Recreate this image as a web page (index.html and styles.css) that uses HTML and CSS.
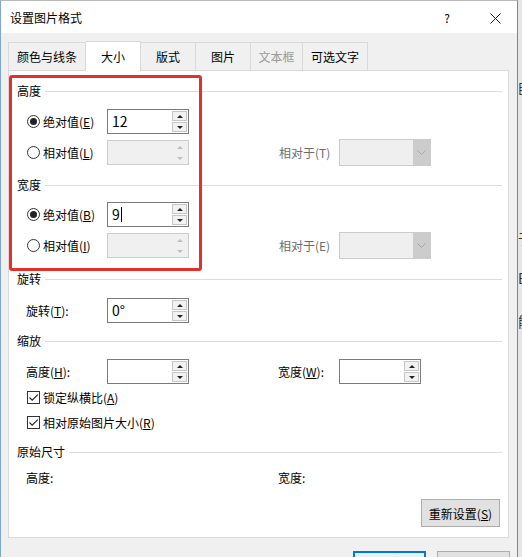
FILE: index.html
```html
<html lang="zh-CN">
<head>
  <meta charset="UTF-8">
  <title>设置图片格式</title>
  <link rel="stylesheet" href="styles.css">
</head>
<body>
  <div class="screen">
    <div class="window">
      <div class="titlebar">
        <span class="title">设置图片格式</span>
        <span class="help">?</span>
        <span class="close">
          <svg width="11" height="11" viewBox="0 0 11 11"><path d="M0.5 0.5L10.5 10.5M10.5 0.5L0.5 10.5" stroke="#1a1a1a" stroke-width="1" fill="none"/></svg>
        </span>
      </div>

      <div class="client">
        <div class="tabs">
          <div class="tab t-color">颜色与线条</div>
          <div class="tab t-size active">大小</div>
          <div class="tab t-55">版式</div>
          <div class="tab t-55">图片</div>
          <div class="tab t-text disabled">文本框</div>
          <div class="tab t-alt">可选文字</div>
        </div>

        <div class="panel">
          <div class="annot"></div>

          <div class="heading"><span>高度</span></div>
          <div class="rows gap5">
            <div class="row">
              <label class="radio"><i class="dot on"></i>绝对值(<u>E</u>)</label>
              <div class="spin"><span class="val">12</span><span class="btns"><b class="up"></b><b class="down"></b></span></div>
            </div>
            <div class="row">
              <label class="radio"><i class="dot"></i>相对值(<u>L</u>)</label>
              <div class="spin off"><span class="val"></span><span class="btns"><b class="up"></b><b class="down"></b></span></div>
              <span></span>
              <span class="dim">相对于(T)</span>
              <div class="combo"><span class="field"></span><span class="arrow"><svg width="9" height="6" viewBox="0 0 9 6"><path d="M0.5 0.5L4.5 4.5L8.5 0.5" stroke="#a8a8a8" fill="none"/></svg></span></div>
            </div>
          </div>

          <div class="heading gap7"><span>宽度</span></div>
          <div class="rows gap4">
            <div class="row">
              <label class="radio"><i class="dot on"></i>绝对值(<u>B</u>)</label>
              <div class="spin"><span class="val">9<em class="caret"></em></span><span class="btns"><b class="up"></b><b class="down"></b></span></div>
            </div>
            <div class="row">
              <label class="radio"><i class="dot"></i>相对值(<u>I</u>)</label>
              <div class="spin off"><span class="val"></span><span class="btns"><b class="up"></b><b class="down"></b></span></div>
              <span></span>
              <span class="dim">相对于(E)</span>
              <div class="combo"><span class="field"></span><span class="arrow"><svg width="9" height="6" viewBox="0 0 9 6"><path d="M0.5 0.5L4.5 4.5L8.5 0.5" stroke="#a8a8a8" fill="none"/></svg></span></div>
            </div>
          </div>

          <div class="heading gap8"><span>旋转</span></div>
          <div class="rows gap6">
            <div class="row">
              <span class="lbl">旋转(<u>T</u>):</span>
              <div class="spin"><span class="val">0°</span><span class="btns"><b class="up"></b><b class="down"></b></span></div>
            </div>
          </div>

          <div class="heading gap5"><span>缩放</span></div>
          <div class="rows gap5">
            <div class="row">
              <span class="lbl">高度(<u>H</u>):</span>
              <div class="spin"><span class="val"></span><span class="btns"><b class="up"></b><b class="down"></b></span></div>
              <span></span>
              <span class="lbl">宽度(<u>W</u>):</span>
              <div class="spin"><span class="val"></span><span class="btns"><b class="up"></b><b class="down"></b></span></div>
            </div>
            <div class="check-row first">
              <label class="check"><i class="box"><svg width="11" height="11" viewBox="0 0 11 11"><path d="M1.5 5.5L4.2 8.2L9.8 2.6" stroke="#222" stroke-width="1.1" fill="none"/></svg></i>锁定纵横比(<u>A</u>)</label>
            </div>
            <div class="check-row">
              <label class="check"><i class="box"><svg width="11" height="11" viewBox="0 0 11 11"><path d="M1.5 5.5L4.2 8.2L9.8 2.6" stroke="#222" stroke-width="1.1" fill="none"/></svg></i>相对原始图片大小(<u>R</u>)</label>
            </div>
          </div>

          <div class="heading gap7"><span>原始尺寸</span></div>
          <div class="rows gap3">
            <div class="row short">
              <span class="lbl">高度:</span>
              <span></span>
              <span></span>
              <span class="lbl">宽度:</span>
            </div>
          </div>

          <div class="actions">
            <button class="btn reset">重新设置(<u>S</u>)</button>
          </div>
        </div>

        <div class="footer">
          <button class="btn ok">确定</button>
          <button class="btn">取消</button>
        </div>
      </div>
    </div>

    <div class="backdrop">
      <span class="frag f1">卧</span>
      <span class="frag f2">于</span>
      <span class="frag f3">E</span>
      <span class="frag f4">能</span>
    </div>
  </div>
</body>
</html>
```

FILE: styles.css
```css
* { box-sizing: border-box; }
html, body {
  margin: 0;
  background: #e6e6e6;
}

body {
  font-family: "Noto Sans CJK SC", "Microsoft YaHei", sans-serif;
  font-size: 12px;
  line-height: 16px;
  color: #000;
}

.screen {
  display: flex;
  width: 522px;
  height: 557px;
  overflow: hidden;
}

.window {
  width: 518px;
  height: 557px;
  border-left: 1px solid #7ea6d6;
  border-right: 1px solid #4f9b98;
  border-top: 1px solid #b9b9b9;
  background: #f0f0f0;
  flex: none;
}

/* title bar */
.titlebar {
  height: 32px;
  background: #fff;
  display: flex;
  align-items: center;
  padding: 2px 0 0 9px;
}
.title { flex: 1; }
.help {
  width: 12px;
  margin-right: 37px;
  text-align: center;
}
.close {
  display: flex;
  margin-right: 16px;
}

/* tabs */
.client {
  height: 524px;
  padding-top: 8px;
}
.tabs {
  display: flex;
  height: 29px;
  margin-left: 7px;
  position: relative;
  z-index: 1;
}
.tab {
  height: 28px;
  margin-top: 1px;
  border: 1px solid #d9d9d9;
  border-left: none;
  border-bottom: none;
  background: #f0f0f0;
  text-align: center;
  line-height: 28px;
}
.tab:first-child { border-left: 1px solid #d9d9d9; }
.t-color { width: 78px; }
.t-size { width: 55px; }
.t-55 { width: 55px; }
.t-text { width: 52px; }
.t-alt { width: 65px; }
.tab.active {
  background: #fff;
  height: 30px;
  margin-top: 0;
  line-height: 30px;
}
.tab.disabled { color: #9a9a9a; }

/* panel */
.panel {
  position: relative;
  width: 501px;
  height: 468px;
  margin-left: 7px;
  border: 1px solid #d9d9d9;
  background: #fff;
  padding: 10px 6px 0 8px;
}

.annot {
  position: absolute;
  left: 0;
  top: 4px;
  width: 193px;
  height: 196px;
  border: 3px solid #e2312d;
  border-radius: 3px;
}

.heading {
  display: flex;
  align-items: center;
  height: 20px;
}
.heading::after {
  content: "";
  flex: 1;
  border-top: 1px solid #dcdcdc;
  margin-left: 4px;
}

.gap3 { margin-top: 3px; }
.gap4 { margin-top: 4px; }
.gap5 { margin-top: 5px; }
.gap6 { margin-top: 6px; }
.gap7 { margin-top: 7px; }
.gap8 { margin-top: 8px; }

.rows { padding-left: 10px; }

.row {
  display: grid;
  grid-template-columns: 80px 82px 90px 60px 92px;
  align-items: center;
  height: 31px;
}
.row.short { height: 26px; }

.lbl { margin-left: -1px; }
.dim { color: #6d6d6d; }

/* radio */
.radio {
  display: flex;
  align-items: center;
}
.dot {
  width: 13px;
  height: 13px;
  border: 1px solid #333;
  border-radius: 50%;
  margin-right: 3px;
  display: flex;
  align-items: center;
  justify-content: center;
}
.dot.on::before {
  content: "";
  width: 7px;
  height: 7px;
  border-radius: 50%;
  background: #222;
}

/* checkbox */
.check-row {
  display: flex;
  align-items: center;
  height: 25px;
}
.check-row.first { margin-top: -2px; }
.check {
  display: flex;
  align-items: center;
}
.box {
  width: 13px;
  height: 13px;
  border: 1px solid #333;
  margin-right: 3px;
  display: flex;
}

/* spinner */
.spin {
  display: flex;
  width: 82px;
  height: 25px;
  border: 1px solid #7a7a7a;
  background: #fff;
}
.spin .val {
  flex: 1;
  padding-left: 4px;
  font-size: 14px;
  line-height: 23px;
  display: flex;
  align-items: center;
}
.caret {
  width: 1px;
  height: 15px;
  background: #000;
  margin-left: 1px;
}
.spin .btns {
  width: 16px;
  display: flex;
  flex-direction: column;
  padding: 1px 1px 1px 0;
  gap: 1px;
}
.spin b {
  flex: 1;
  background: #f2f2f2;
  border: 1px solid #c6c6c6;
  display: flex;
  align-items: center;
  justify-content: center;
}
.spin b::before {
  content: "";
  border-left: 3px solid transparent;
  border-right: 3px solid transparent;
}
.spin b.up::before { border-bottom: 3px solid #222; }
.spin b.down::before { border-top: 3px solid #222; }

.spin.off {
  border-color: #cccccc;
  background: #f0f0f0;
}
.spin.off b {
  background: #f0f0f0;
  border-color: #f0f0f0;
}
.spin.off b.up::before { border-bottom-color: #bdbdbd; }
.spin.off b.down::before { border-top-color: #bdbdbd; }

/* disabled combo */
.combo {
  display: flex;
  width: 92px;
  height: 27px;
  border: 1px solid #cccccc;
  background: #efefef;
}
.combo .field { flex: 1; }
.combo .arrow {
  width: 17px;
  background: #cccccc;
  display: flex;
  align-items: center;
  justify-content: center;
}

/* buttons */
.btn {
  font-family: inherit;
  font-size: 12px;
  color: #000;
  background: #e1e1e1;
  border: 1px solid #adadad;
  padding: 0;
}
.actions {
  display: flex;
  justify-content: flex-end;
  margin-top: 8px;
  padding-right: 2px;
}
.reset {
  width: 79px;
  height: 28px;
}

.footer {
  display: flex;
  justify-content: flex-end;
  gap: 11px;
  margin-top: 13px;
  padding-right: 7px;
}
.footer .btn {
  width: 73px;
  height: 23px;
}
.footer .ok {
  border: 2px solid #0078d7;
  background: #e5f1fb;
}

/* part of the document behind the dialog */
.backdrop {
  width: 4px;
  flex: none;
  overflow: hidden;
  display: flex;
  flex-direction: column;
  font-size: 14px;
  line-height: 16px;
  color: #333;
}
.frag { display: block; white-space: nowrap; }
.f1 { margin-top: 80px; }
.f2 { margin-top: 134px; }
.f3 { margin-top: 24px; }
.f4 { margin-top: 27px; }
```
